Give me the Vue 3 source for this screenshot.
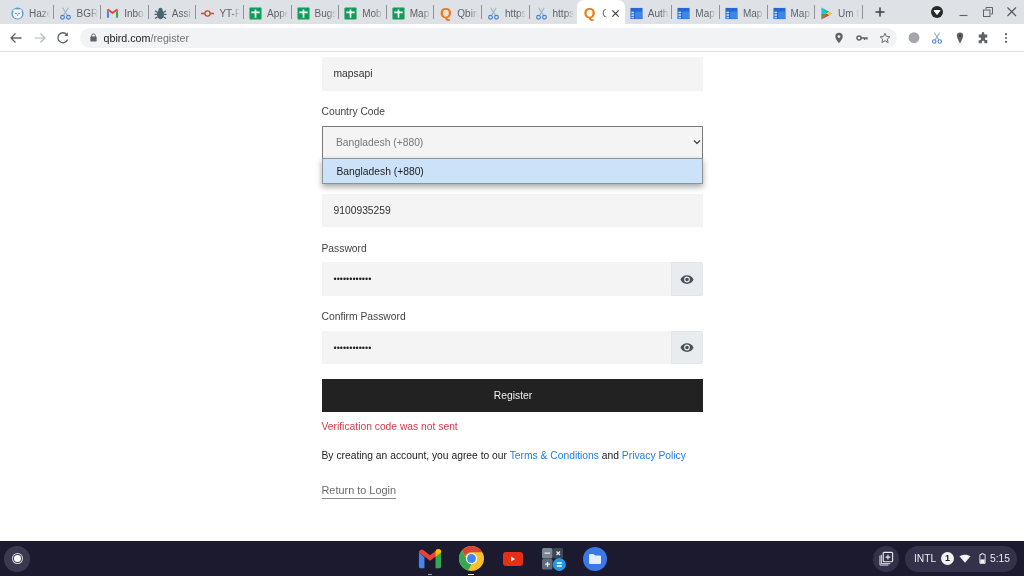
<script setup>
const tabs = [
  { kind: 'haze', title: 'Haze' },
  { kind: 'scissors', title: 'BGR' },
  { kind: 'gmail', title: 'Inbox' },
  { kind: 'bug', title: 'Assi' },
  { kind: 'yt', title: 'YT-F' },
  { kind: 'sheet', title: 'Appe' },
  { kind: 'sheet', title: 'Bugs' },
  { kind: 'sheet', title: 'Mob' },
  { kind: 'sheet', title: 'Map' },
  { kind: 'q', title: 'Qbird' },
  { kind: 'scissors', title: 'https' },
  { kind: 'scissors', title: 'https' },
  { kind: 'q', title: 'Qbird', active: true },
  { kind: 'table', title: 'Auth' },
  { kind: 'table', title: 'Map' },
  { kind: 'table', title: 'Map' },
  { kind: 'table', title: 'Map' },
  { kind: 'play', title: 'Um t' }
]
const hideSep = (i) => tabs[i].active || (tabs[i + 1] && tabs[i + 1].active)
const passwords = [
  { label: 'Password' },
  { label: 'Confirm Password' }
]
</script>

<template>
  <div class="screen">
    <header class="chrome">
      <div class="tabstrip">
        <div
          v-for="(t, i) in tabs"
          :key="i"
          class="tab"
          :class="{ active: t.active, nosep: hideSep(i) }"
        >
          <svg v-if="t.kind === 'haze'" class="fav" viewBox="0 0 14 14">
            <circle cx="7" cy="7" r="6.500" fill="#5b9bd8" />
            <circle cx="7" cy="7.500" r="5" fill="#f4f6f8" />
            <circle cx="4" cy="4" r="1.600" fill="#f4f6f8" />
            <circle cx="10" cy="4" r="1.600" fill="#f4f6f8" />
            <circle cx="5.300" cy="7" r=".8" fill="#567" />
            <circle cx="8.700" cy="7" r=".8" fill="#567" />
            <circle cx="7" cy="9" r=".8" fill="#89a" />
          </svg>
          <svg v-else-if="t.kind === 'scissors'" class="fav" viewBox="0 0 14 14" fill="none" stroke="#3f7fd6" stroke-width="1.200">
            <path d="M4 .8 9 9M10 .8 5 9" stroke="#9fb4cc" />
            <circle cx="3.800" cy="11" r="2" />
            <circle cx="10.200" cy="11" r="2" />
          </svg>
          <svg v-else-if="t.kind === 'gmail'" class="fav" viewBox="0 0 14 14">
            <path d="M1 3v8.500h2.200V5z" fill="#4285f4" />
            <path d="M10.800 5v6.500H13V3z" fill="#34a853" />
            <path d="M1 3 7 7.800 13 3 11.500 1.800 7 5 2.500 1.800z" fill="#ea4335" />
          </svg>
          <svg v-else-if="t.kind === 'bug'" class="fav" viewBox="0 0 14 14">
            <ellipse cx="7" cy="8" rx="3.800" ry="5.200" fill="#4a6572" />
            <circle cx="7" cy="3" r="2.200" fill="#4a6572" />
            <path d="M1 4 4 6M13 4 10 6M.5 8h3M13.500 8h-3M1 12.500 4 10.500M13 12.500 10 10.500" stroke="#4a6572" stroke-width="1.300" />
          </svg>
          <svg v-else-if="t.kind === 'yt'" class="fav" viewBox="0 0 14 14" fill="none" stroke="#e53935" stroke-width="1.400">
            <circle cx="7" cy="7" r="2.800" />
            <path d="M0 7h4M10 7h4" />
          </svg>
          <svg v-else-if="t.kind === 'sheet'" class="fav" viewBox="0 0 14 14">
            <rect x=".5" y=".5" width="13" height="13" rx="1" fill="#0f9d58" />
            <path d="M2.500 5.800h9M7 2.800v8.700" stroke="#fff" stroke-width="1.800" />
          </svg>
          <span v-else-if="t.kind === 'q'" class="q">Q</span>
          <svg v-else-if="t.kind === 'table'" class="fav" viewBox="0 0 14 14">
            <rect x=".5" y="1" width="13" height="12" fill="#2468d4" />
            <rect x="5.500" y="5" width="7.500" height="7.500" fill="#3f86e6" />
            <rect x="1.500" y="5" width="2.800" height="1.800" fill="#bcd6f8" />
            <rect x="1.500" y="7.800" width="2.800" height="1.800" fill="#bcd6f8" />
            <rect x="1.500" y="10.600" width="2.800" height="1.600" fill="#bcd6f8" />
          </svg>
          <svg v-else class="fav" viewBox="0 0 14 14">
            <path d="M1.500.5v6.500h5.500z" fill="#29b6f6" />
            <path d="M1.500 13.500V7h5.500z" fill="#43a047" />
            <path d="M1.500.5 7 7 10 5z" fill="#00c8a0" />
            <path d="M1.500 13.500 7 7 10 9z" fill="#e53935" />
            <path d="M7 7 10 5 13.500 7 10 9z" fill="#fbc02d" />
          </svg>
          <span class="title">{{ t.title }}</span>
          <svg v-if="t.active" class="tabclose" viewBox="0 0 10 10" fill="none" stroke="#3c4043" stroke-width="1.300">
            <path d="M1.500 1.500 8.500 8.500M8.500 1.500 1.500 8.500" />
          </svg>
        </div>
        <svg class="newtab" viewBox="0 0 12 12" fill="none" stroke="#3c4043" stroke-width="1.500">
          <path d="M6 1.500v9M1.500 6h9" />
        </svg>
        <div class="spring"></div>
        <svg class="winbtn profile" viewBox="0 0 14 14">
          <circle cx="7" cy="7" r="6" fill="#26282c" />
          <path d="M4 5.500h6L7 9.500z" fill="#fff" stroke="#fff" stroke-linejoin="round" />
        </svg>
        <svg class="winbtn" viewBox="0 0 12 12" fill="none" stroke="#60646a" stroke-width="1.100">
          <path d="M1.500 9.500h8" />
        </svg>
        <svg class="winbtn" viewBox="0 0 12 12" fill="none" stroke="#60646a" stroke-width="1">
          <rect x="1.500" y="4" width="6.500" height="6.500" />
          <path d="M4 3V1.500h6.500V8H9" />
        </svg>
        <svg class="winbtn last" viewBox="0 0 12 12" fill="none" stroke="#50545a" stroke-width="1.100">
          <path d="M1.500 1.500l8.500 8.500M10 1.500l-8.500 8.500" />
        </svg>
      </div>

      <div class="toolbar">
        <svg class="navicon" viewBox="0 0 14 14" fill="none" stroke="#5f6368" stroke-width="1.300">
          <path d="M12.500 7H2M6.500 2.500 2 7l4.500 4.500" />
        </svg>
        <svg class="navicon" viewBox="0 0 14 14" fill="none" stroke="#b4b7bb" stroke-width="1.200">
          <path d="M1.500 7H12M7.500 2.500 12 7l-4.500 4.500" />
        </svg>
        <svg class="navicon" viewBox="0 0 14 14" fill="none" stroke="#5f6368" stroke-width="1.300">
          <path d="M11.600 8.500A5 5 0 1 1 10.800 3.600" />
          <path d="M11.800 1.300v3.600H8.200z" fill="#5f6368" stroke="none" />
        </svg>
        <div class="omnibox">
          <svg class="lock" viewBox="0 0 10 10">
            <rect x="1.500" y="4" width="7" height="5.500" rx=".8" fill="#5f6368" />
            <path d="M3 4.500V3a2 2 0 0 1 4 0v1.500" fill="none" stroke="#5f6368" stroke-width="1.100" />
          </svg>
          <span class="url"><span class="host">qbird.com</span><span class="path">/register</span></span>
          <div class="spring"></div>
          <svg class="omniicon" viewBox="0 0 14 14">
            <path d="M7 1a4.300 4.300 0 0 0-4.300 4.300C2.700 8.500 7 13 7 13s4.300-4.500 4.300-7.700A4.300 4.300 0 0 0 7 1z" fill="#5f6368" />
            <circle cx="7" cy="5.300" r="1.600" fill="#f1f3f4" />
          </svg>
          <svg class="omniicon" viewBox="0 0 14 14" fill="none" stroke="#5f6368" stroke-width="1.700">
            <circle cx="3.500" cy="7" r="2.400" />
            <path d="M5.700 7h7.800M10 7v2.200M12.800 7v1.800" />
          </svg>
          <svg class="omniicon" viewBox="0 0 14 14" fill="none" stroke="#5f6368" stroke-width="1.100">
            <path d="M7 1.500 8.700 5.200l4 .4-3 2.700.9 4L7 10.200l-3.600 2.100.9-4-3-2.700 4-.4z" />
          </svg>
        </div>
        <svg class="exticon first" viewBox="0 0 14 14">
          <circle cx="7" cy="6.500" r="6.300" fill="#a3a6aa" />
          <path d="M6 12l2.500 1.800V12z" fill="#a3a6aa" />
        </svg>
        <svg class="exticon" viewBox="0 0 14 14" fill="none" stroke="#3f7fd6" stroke-width="1.200">
          <path d="M4 .8 9 9M10 .8 5 9" stroke="#8fa8c4" />
          <circle cx="3.800" cy="11" r="2" />
          <circle cx="10.200" cy="11" r="2" />
        </svg>
        <svg class="exticon" viewBox="0 0 14 14">
          <path d="M7 .5a3.700 3.700 0 0 0-3.700 3.700C3.300 7.500 7 13.500 7 13.500s3.700-6 3.700-9.300A3.700 3.700 0 0 0 7 .5z" fill="#5f6368" />
          <circle cx="7" cy="4.300" r="1" fill="#222" />
        </svg>
        <svg class="exticon" viewBox="0 0 14 14">
          <path d="M5.500 1.500a1.500 1.500 0 0 1 3 0V3H12v3.300h-1.300a1.500 1.500 0 0 0 0 3H12V13H8.600v-1.200a1.500 1.500 0 0 0-3 0V13H2V9.500h1.200a1.500 1.500 0 0 0 0-3H2V3h3.500z" fill="#5f6368" />
        </svg>
        <svg class="exticon" viewBox="0 0 14 14" fill="#5f6368">
          <circle cx="7" cy="2.500" r="1.300" />
          <circle cx="7" cy="7" r="1.300" />
          <circle cx="7" cy="11.500" r="1.300" />
        </svg>
      </div>
    </header>

    <main class="page">
      <form class="form" @submit.prevent>
        <div class="input first-input">mapsapi</div>

        <div class="field">
          <div class="label">Country Code</div>
          <div class="select-wrap">
            <div class="select">
              <span>Bangladesh (+880)</span>
              <svg class="chev" viewBox="0 0 8 6" fill="none" stroke="#333" stroke-width="1.100">
                <path d="M1 1.500 4 4.500 7 1.500" />
              </svg>
            </div>
            <div class="menu">Bangladesh (+880)</div>
          </div>
        </div>

        <div class="field">
          <div class="label">Phone Number</div>
          <div class="input">9100935259</div>
        </div>

        <div v-for="p in passwords" :key="p.label" class="field">
          <div class="label">{{ p.label }}</div>
          <div class="group">
            <div class="input dots">••••••••••••</div>
            <div class="addon">
              <svg class="eye" viewBox="0 0 16 12">
                <path d="M8 1C4.500 1 1.700 3 .5 6c1.200 3 4 5 7.500 5s6.300-2 7.500-5C14.300 3 11.500 1 8 1z" fill="#495057" />
                <circle cx="8" cy="6" r="3.300" fill="#e9ecef" />
                <circle cx="8" cy="6" r="2" fill="#495057" />
              </svg>
            </div>
          </div>
        </div>

        <button class="register" type="button">Register</button>
        <div class="error">Verification code was not sent</div>
        <p class="terms">By creating an account, you agree to our <a>Terms &amp; Conditions</a> and <a>Privacy Policy</a></p>
        <div class="back"><a>Return to Login</a></div>
      </form>
    </main>

    <footer class="shelf">
      <div class="launcher"><span class="launcher-dot"></span></div>
      <div class="apps">
        <div class="app running-small">
          <svg viewBox="0 0 26 22" class="appicon">
            <path d="M1 4v15a2 2 0 0 0 2 2h4V9z" fill="#4285f4" />
            <path d="M19 9v12h4a2 2 0 0 0 2-2V4z" fill="#34a853" />
            <path d="M1 4a3 3 0 0 1 5-2.400l7 5.400 7-5.400A3 3 0 0 1 25 4l-12 9z" fill="#ea4335" />
            <path d="M25 4l-6 5V2.500A3 3 0 0 1 25 4z" fill="#fbbc04" />
          </svg>
        </div>
        <div class="app running">
          <svg viewBox="0 0 24 24" class="appicon chrome-icon">
            <circle cx="12" cy="12" r="12" fill="#fbc02d" />
            <path d="M12 0a12 12 0 0 1 10.400 6H12a6 6 0 0 0-5.700 4L2.700 4.400A12 12 0 0 1 12 0z" fill="#db4437" />
            <path d="M2.700 4.400 7 12a5 5 0 0 0 5 5.400L8.700 23.500A12 12 0 0 1 2.700 4.400z" fill="#34a853" />
            <circle cx="12" cy="12" r="5.400" fill="#fff" />
            <circle cx="12" cy="12" r="4.300" fill="#4285f4" />
          </svg>
        </div>
        <div class="app">
          <svg viewBox="0 0 20 14" class="appicon yt-icon">
            <rect width="20" height="14" rx="3" fill="#e62f16" />
            <path d="M8 4.500v5l4-2.500z" fill="#fff" />
          </svg>
        </div>
        <div class="app">
          <svg viewBox="0 0 24 24" class="appicon">
            <rect x="0" y="1" width="10.500" height="10.500" rx="1.500" fill="#7b8794" />
            <rect x="11" y="1" width="10" height="10.500" rx="1.500" fill="#3c4654" />
            <rect x="0" y="12" width="10.500" height="10.500" rx="1.500" fill="#5f6b7a" />
            <path d="M2.500 6.200h5.500M3 17.200h5M5.500 14.700v5" stroke="#e8eaed" stroke-width="1.300" />
            <path d="M14.500 4.500l3.500 3.500M18 4.500l-3.500 3.500" stroke="#e8eaed" stroke-width="1.200" />
            <circle cx="17.300" cy="17.500" r="6.500" fill="#1e9be8" />
            <path d="M14.800 16h5M14.800 19h5" stroke="#fff" stroke-width="1.300" />
          </svg>
        </div>
        <div class="app">
          <svg viewBox="0 0 24 24" class="appicon files-icon">
            <circle cx="12" cy="12" r="12" fill="#3b78e7" />
            <path d="M6 8a1 1 0 0 1 1-1h3.500l1.500 1.500h5a1 1 0 0 1 1 1V16a1 1 0 0 1-1 1H7a1 1 0 0 1-1-1z" fill="#e3edfd" />
          </svg>
        </div>
      </div>
      <div class="tray">
        <div class="overview">
          <svg viewBox="0 0 16 16" fill="none" stroke="#e8eaed" stroke-width="1.200">
            <rect x="4.500" y="1.500" width="10" height="10" rx="1" />
            <path d="M2.500 4v9.500H12M1 5v10h9" stroke-width="1" />
            <path d="M9.500 4v5M7 6.500h5" />
          </svg>
        </div>
        <div class="status">
          <span class="intl">INTL</span>
          <span class="badge">1</span>
          <svg class="wifi" viewBox="0 0 14 10"><path d="M7 10 .5 2.500C4 0 10 0 13.500 2.500z" fill="#f1f3f4" /></svg>
          <svg class="batt" viewBox="0 0 8 12">
            <path d="M2.800 .5h2.400v1H7v10H1v-10h1.800z" fill="none" stroke="#f1f3f4" />
            <rect x="1.500" y="7" width="5" height="4.500" fill="#f1f3f4" />
          </svg>
          <span class="clock">5:15</span>
        </div>
      </div>
    </footer>
  </div>
</template>

<style>
html, body { margin: 0; overflow: hidden; background: #fff; }
</style>

<style scoped>
.screen {
  width: 1024px;
  height: 576px;
  display: flex;
  flex-direction: column;
  font-family: "Liberation Sans", Arial, sans-serif;
  overflow: hidden;
  background: #fff;
  filter: blur(0.35px);
}
.chrome { flex: none; }
.tabstrip {
  height: 24px;
  background: #dee1e6;
  display: flex;
  align-items: stretch;
  padding-left: 6px;
}
.tab {
  width: 47.6px;
  box-sizing: border-box;
  flex: none;
  display: flex;
  align-items: center;
  padding-left: 5px;
  position: relative;
  margin-top: 2px;
}
.tab::after {
  content: "";
  position: absolute;
  right: 0;
  top: 3px;
  bottom: 5px;
  width: 1px;
  background: #8f9297;
}
.tab.nosep::after { display: none; }
.tab.active {
  background: #fff;
  border-radius: 7px 7px 0 0;
  margin-top: 0;
  padding-top: 2px;
  padding-left: 6px;
}
.fav { width: 13px; height: 13px; flex: none; }
.q {
  width: 13px;
  flex: none;
  text-align: center;
  font: bold 15px/14px "Liberation Sans", sans-serif;
  color: #ee7a18;
}
.title {
  margin-left: 5px;
  width: 21px;
  flex: none;
  overflow: hidden;
  white-space: nowrap;
  font-size: 10px;
  color: #5f6368;
  -webkit-mask-image: linear-gradient(90deg, #000 60%, transparent 100%);
  mask-image: linear-gradient(90deg, #000 60%, transparent 100%);
}
.tab.active .title { width: 5px; margin-left: 6px; }
.tabclose { width: 9px; height: 9px; margin-left: 3.500px; flex: none; }
.newtab { width: 12px; height: 12px; margin-left: 11px; align-self: center; flex: none; }
.spring { flex: 1; }
.winbtn { width: 12px; height: 12px; align-self: center; flex: none; margin-left: 12px; }
.winbtn.profile { width: 14px; height: 14px; margin-right: 2px; }
.winbtn.last { margin-right: 6px; }
.toolbar {
  height: 27px;
  background: #fff;
  border-bottom: 1px solid #dadce0;
  display: flex;
  align-items: center;
  padding-left: 9px;
}
.navicon { width: 14px; height: 14px; margin-right: 9.500px; flex: none; }
.omnibox {
  flex: none;
  width: 817px;
  height: 20px;
  border-radius: 10px;
  background: #f1f3f4;
  display: flex;
  align-items: center;
  box-sizing: border-box;
  padding: 0 6px 0 9px;
}
.lock { width: 9px; height: 9px; flex: none; }
.url { margin-left: 6px; font-size: 10.700px; }
.host { color: #202124; }
.path { color: #70757a; }
.omniicon { width: 12px; height: 12px; margin-left: 11px; flex: none; }
.exticon { width: 12px; height: 12px; flex: none; margin-left: 11px; }
.page { flex: 1; min-height: 0; overflow: hidden; background: #fff; }
.form {
  width: 381px;
  margin: 0 auto;
  padding-top: 5.300px;
  font-size: 10.300px;
  color: #333;
}
.input {
  height: 33.400px;
  box-sizing: border-box;
  background: #f4f4f4;
  display: flex;
  align-items: center;
  padding-left: 12px;
  color: #333;
}
.field { margin-top: 14.500px; }
.label { height: 14px; line-height: 14px; margin-bottom: 6.500px; color: #444; }
.select-wrap { position: relative; }
.select {
  height: 33.400px;
  box-sizing: border-box;
  background: #f4f4f4;
  border: 1px solid #7a7a7a;
  display: flex;
  align-items: center;
  justify-content: space-between;
  padding: 0 1px 0 13.500px;
  color: #777;
}
.chev { width: 8px; height: 6px; }
.menu {
  position: absolute;
  z-index: 2;
  left: 0.500px;
  right: 0;
  top: 32.400px;
  height: 26px;
  box-sizing: border-box;
  background: #cce2f8;
  border: 1px solid #8f9499;
  display: flex;
  align-items: center;
  padding-left: 13.500px;
  color: #222;
  box-shadow: 0 3px 6px rgba(0, 0, 0, 0.35);
}
.group { display: flex; }
.group .input { flex: 1; }
.dots { font-size: 9px; color: #222; }
.addon {
  width: 32px;
  flex: none;
  box-sizing: border-box;
  background: #e9ecef;
  border: 1px solid #e3e6e9;
  border-radius: 0 2px 2px 0;
  display: flex;
  align-items: center;
  justify-content: center;
}
.eye { width: 14px; height: 11px; }
.register {
  display: block;
  width: 100%;
  height: 33px;
  margin-top: 15px;
  border: 0;
  border-radius: 0;
  background: #222;
  color: #f2f2f2;
  font: 10.300px "Liberation Sans", sans-serif;
  padding: 0 0 1px 2px;
}
.error { margin-top: 7.400px; height: 14px; line-height: 14px; color: #d9394c; }
.terms { margin: 15px 0 0; line-height: 14px; color: #222; white-space: nowrap; }
.terms a { color: #2080e8; }
.back { margin-top: 20px; line-height: 14px; }
.back a {
  display: inline-block;
  color: #6b6b6b;
  font-size: 10.900px;
  border-bottom: 1px solid #8a8a8a;
  padding-bottom: 1px;
}
.shelf {
  flex: none;
  height: 35px;
  background: #1b1a2e;
  position: relative;
  display: flex;
  align-items: center;
  color: #f1f3f4;
}
.launcher {
  width: 26px;
  height: 26px;
  margin-left: 4px;
  border-radius: 50%;
  background: #3a3950;
  display: flex;
  align-items: center;
  justify-content: center;
}
.launcher-dot {
  width: 7px;
  height: 7px;
  border-radius: 50%;
  background: #fff;
  box-shadow: 0 0 0 1px #3a3950, 0 0 0 2px #d6d6dc;
}
.apps {
  position: absolute;
  left: 409.400px;
  top: 0;
  height: 35px;
  display: flex;
}
.app {
  width: 41.250px;
  height: 35px;
  display: flex;
  align-items: center;
  justify-content: center;
  position: relative;
}
.appicon { width: 24px; height: 24px; }
.chrome-icon { width: 25px; height: 25px; }
.yt-icon { width: 20px; height: 14px; }
.running::after, .running-small::after {
  content: "";
  position: absolute;
  bottom: 1px;
  left: 50%;
  width: 6px;
  height: 1px;
  margin-left: -3px;
  background: #e8eaed;
}
.running-small::after { width: 4px; margin-left: -2px; background: #9aa0a6; }
.tray {
  margin-left: auto;
  display: flex;
  align-items: center;
  gap: 6px;
  margin-right: 7px;
}
.overview {
  width: 26px;
  height: 26px;
  border-radius: 50%;
  background: #33324a;
  display: flex;
  align-items: center;
  justify-content: center;
}
.overview svg { width: 15px; height: 15px; }
.status {
  height: 26px;
  width: 112px;
  box-sizing: border-box;
  border-radius: 13px;
  background: #33324a;
  display: flex;
  align-items: center;
  padding-left: 9px;
  font-size: 10.300px;
  color: #e8eaed;
}
.intl { width: 21px; }
.badge {
  width: 13px;
  height: 13px;
  margin-left: 6px;
  border-radius: 50%;
  background: #f1f3f4;
  color: #222;
  font-size: 9px;
  font-weight: bold;
  line-height: 13px;
  text-align: center;
}
.wifi { width: 12px; height: 9px; margin-left: 5px; }
.batt { width: 7px; height: 11px; margin-left: 7.500px; }
.clock { margin-left: 4.500px; }
</style>
